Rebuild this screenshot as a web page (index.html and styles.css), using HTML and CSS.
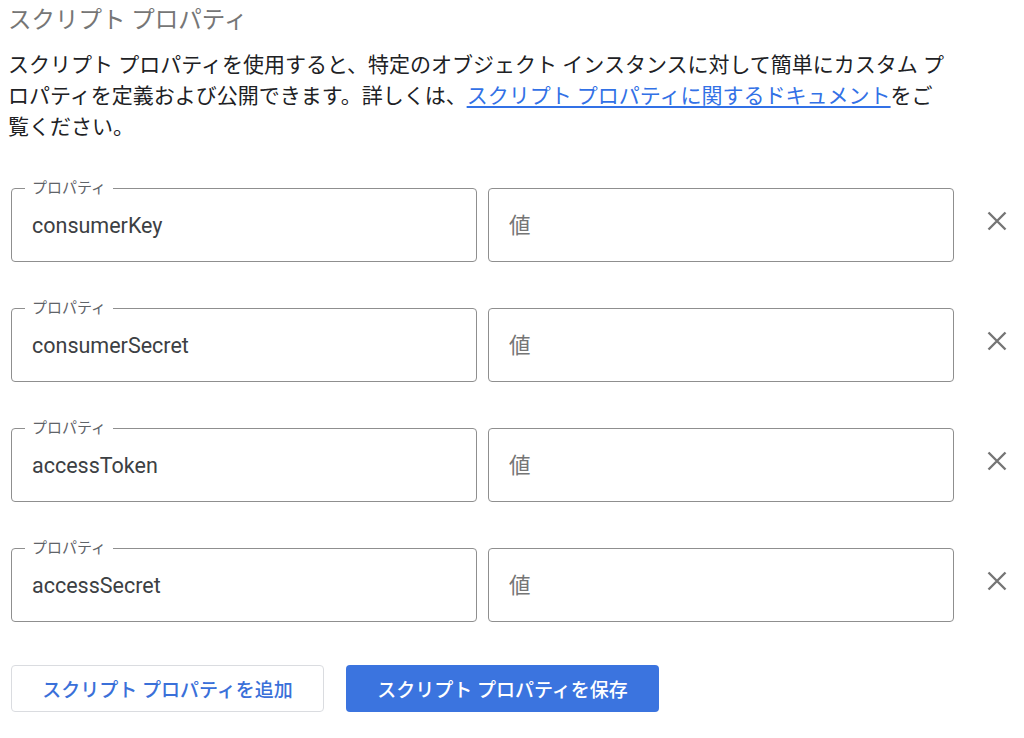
FILE: index.html
```html
<!DOCTYPE html>
<html lang="ja">
<head>
  <meta charset="UTF-8">
  <meta name="viewport" content="width=device-width, initial-scale=1.0">
  <title>スクリプト プロパティ</title>
  <link rel="stylesheet" href="styles.css">
</head>
<body>
  <div class="page">
    <h2 class="title">スクリプト プロパティ</h2>
    <p class="intro">スクリプト プロパティを使用すると、特定のオブジェクト インスタンスに対して簡単にカスタム プロパティを定義および公開できます。詳しくは、<a href="#">スクリプト プロパティに関するドキュメント</a>をご覧ください。</p>

    <!-- Property rows -->
    <div class="rows">
      <div class="row">
        <fieldset class="field">
          <legend>プロパティ</legend>
          <input type="text" value="consumerKey">
        </fieldset>
        <input class="value" type="text" placeholder="値">
        <button class="remove" title="削除">
          <svg width="20" height="20" viewBox="0 0 20 20"><path d="M1.5 1.5 L18.5 18.5 M18.5 1.5 L1.5 18.5" stroke="#757575" stroke-width="2.4" fill="none"/></svg>
        </button>
      </div>
      <div class="row">
        <fieldset class="field">
          <legend>プロパティ</legend>
          <input type="text" value="consumerSecret">
        </fieldset>
        <input class="value" type="text" placeholder="値">
        <button class="remove" title="削除">
          <svg width="20" height="20" viewBox="0 0 20 20"><path d="M1.5 1.5 L18.5 18.5 M18.5 1.5 L1.5 18.5" stroke="#757575" stroke-width="2.4" fill="none"/></svg>
        </button>
      </div>
      <div class="row">
        <fieldset class="field">
          <legend>プロパティ</legend>
          <input type="text" value="accessToken">
        </fieldset>
        <input class="value" type="text" placeholder="値">
        <button class="remove" title="削除">
          <svg width="20" height="20" viewBox="0 0 20 20"><path d="M1.5 1.5 L18.5 18.5 M18.5 1.5 L1.5 18.5" stroke="#757575" stroke-width="2.4" fill="none"/></svg>
        </button>
      </div>
      <div class="row">
        <fieldset class="field">
          <legend>プロパティ</legend>
          <input type="text" value="accessSecret">
        </fieldset>
        <input class="value" type="text" placeholder="値">
        <button class="remove" title="削除">
          <svg width="20" height="20" viewBox="0 0 20 20"><path d="M1.5 1.5 L18.5 18.5 M18.5 1.5 L1.5 18.5" stroke="#757575" stroke-width="2.4" fill="none"/></svg>
        </button>
      </div>
    </div>

    <!-- Actions -->
    <div class="actions">
      <button class="btn btn-outline">スクリプト プロパティを追加</button>
      <button class="btn btn-primary">スクリプト プロパティを保存</button>
    </div>
  </div>
</body>
</html>
```

FILE: styles.css
```css
body {
  margin: 0;
  padding: 0;
  background-color: #ffffff;
  font-family: Roboto, "Noto Sans CJK JP", sans-serif;
  color: #202124;
}

.page {
  padding: 5px 0 0 8px;
}

.title {
  margin: 0;
  font-size: 23.5px;
  line-height: 30px;
  font-weight: 400;
  color: #767676;
}

.intro {
  margin: 15px 0 0 0;
  width: 945px;
  font-size: 21px;
  line-height: 31px;
  color: #202124;
}

.intro a {
  color: #3271e6;
  text-decoration: underline;
  text-underline-offset: 3px;
}

.rows {
  margin: 37px 0 0 3px;
  display: flex;
  flex-direction: column;
  gap: 38px;
}

.row {
  display: flex;
  align-items: flex-end;
  gap: 11px;
}

.field {
  flex-shrink: 0;
  margin: 0;
  padding: 0 20px 7px 20px;
  width: 466px;
  box-sizing: border-box;
  border: 1px solid #8f8f8f;
  border-radius: 4px;
  min-inline-size: 0;
}

.field legend {
  margin-left: -7px;
  padding: 0 7px 0 7px;
  font-size: 15px;
  line-height: 16px;
  color: #5f6368;
}

.field input,
.value {
  font-family: Roboto, "Noto Sans CJK JP", sans-serif;
  font-size: 21.5px;
  color: #3c4043;
  border: none;
  outline: none;
  background: transparent;
  padding: 0;
}

.field input {
  width: 100%;
  height: 58px;
}

.value {
  flex-shrink: 0;
  width: 466px;
  height: 74px;
  box-sizing: border-box;
  border: 1px solid #8f8f8f;
  border-radius: 4px;
  padding: 0 20px;
}

.value::placeholder {
  color: #757575;
}

.remove {
  flex-shrink: 0;
  align-self: center;
  margin-left: 17px;
  width: 30px;
  height: 40px;
  border: none;
  background: transparent;
  padding: 0;
  display: flex;
  justify-content: center;
  align-items: center;
  cursor: pointer;
}

.actions {
  margin: 43px 0 0 3px;
  display: flex;
  gap: 22px;
}

.btn {
  width: 313px;
  height: 47px;
  border-radius: 4px;
  font-family: Roboto, "Noto Sans CJK JP", sans-serif;
  font-size: 19px;
  font-weight: 500;
  cursor: pointer;
}

.btn-outline {
  background-color: #ffffff;
  border: 1px solid #dadce0;
  color: #3a70d9;
}

.btn-primary {
  background-color: #3b74df;
  border: none;
  color: #ffffff;
}
```
